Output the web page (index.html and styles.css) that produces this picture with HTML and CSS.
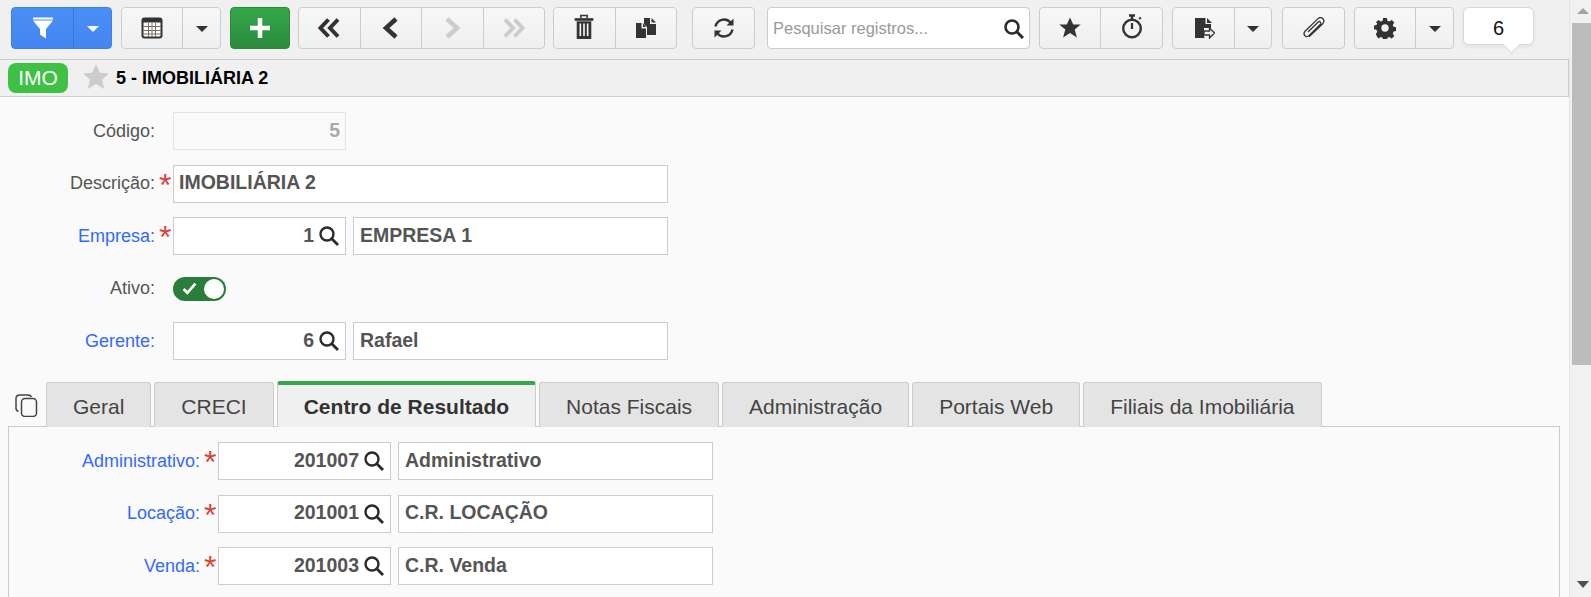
FILE: index.html
```html
<!DOCTYPE html>
<html lang="pt-BR">
<head>
<meta charset="utf-8">
<title>IMOBILIÁRIA 2</title>
<link rel="stylesheet" href="styles.css">
</head>
<body>
<div class="page">
  <main class="main">
    <div class="toolbar">
      <div class="group blue g101 mr9">
        <button class="btn"><svg class="ico" viewBox="0 0 22 22"><path d="M1 .5h20v2H1zM1 3.500h20l-7 8.500v9.500l-6-4V12z" fill="#fff"/></svg></button>
        <button class="btn caret"><i class="tri white"></i></button>
      </div>
      <div class="group g100 mr9">
        <button class="btn"><svg class="ico" viewBox="0 0 22 22"><rect x="1.500" y="1.500" width="19" height="19" rx="2" fill="#fff" stroke="#333" stroke-width="2"/><rect x="2" y="2" width="18" height="3.500" fill="#333"/><path d="M2 9.500h18M2 13.500h18M2 17h18M7.500 6v14M11 6v14M14.500 6v14" stroke="#7d6f66" stroke-width="1" fill="none"/></svg></button>
        <button class="btn caret"><i class="tri"></i></button>
      </div>
      <div class="group green g60 mr8">
        <button class="btn"><svg class="ico" viewBox="0 0 22 22"><path d="M11 1v20M1 11h20" stroke="#fff" stroke-width="4.500" fill="none"/></svg></button>
      </div>
      <div class="group g247 mr8">
        <button class="btn"><svg class="ico wide-ico" viewBox="0 0 24 22"><path d="M11.500 2.500 3.500 11l8 8.500M21 2.500 13 11l8 8.500" stroke="#333" stroke-width="4" fill="none"/></svg></button>
        <button class="btn"><svg class="ico" viewBox="0 0 22 22"><path d="M16 2 6 11l10 9" stroke="#333" stroke-width="4.500" fill="none"/></svg></button>
        <button class="btn"><svg class="ico" viewBox="0 0 22 22"><path d="M6 2l10 9-10 9" stroke="#ccc" stroke-width="4.500" fill="none"/></svg></button>
        <button class="btn"><svg class="ico wide-ico" viewBox="0 0 24 22"><path d="M3 2.500 11 11l-8 8.500M12.500 2.500 20.500 11l-8 8.500" stroke="#ccc" stroke-width="4" fill="none"/></svg></button>
      </div>
      <div class="group g124 mr15">
        <button class="btn"><svg class="ico tall" viewBox="0 0 20 24"><path d="M7 4V1.500h6V4" stroke="#333" stroke-width="1.500" fill="none"/><rect x="1" y="4" width="18" height="2.500" fill="#333"/><path d="M3 7h14v17H3z" fill="#333"/><path d="M6.500 9v12M10 9v12M13.500 9v12" stroke="#f2f2f2" stroke-width="1.600"/></svg></button>
        <button class="btn"><svg class="ico" viewBox="0 0 22 22"><path d="M9 1h6v6h6v11h-9V10L9 7z" fill="#333"/><path d="M16.500 1 21 5.500h-4.500z" fill="#333"/><path d="M1 6h5.500v5.500H11V21H1z" fill="#333"/><path d="M8 6l3 4H8z" fill="#333"/></svg></button>
      </div>
      <div class="group g63 mr12">
        <button class="btn"><svg class="ico" viewBox="0 0 22 22"><path d="M2.500 9.500A8.700 8.700 0 0 1 17.500 5.500M19.500 12.500A8.700 8.700 0 0 1 4.500 16.500" stroke="#333" stroke-width="2.400" fill="none"/><path d="M20.500 1.500v7h-7zM1.500 20.500v-7h7z" fill="#333"/></svg></button>
      </div>
      <div class="search mr9">
        <span class="placeholder">Pesquisar registros...</span>
        <svg class="lens lens-lg" viewBox="0 0 20 20"><circle cx="8" cy="8" r="6.500" fill="none" stroke="#2b2b2b" stroke-width="2.600"/><path d="M12.800 12.800 19 19" stroke="#2b2b2b" stroke-width="3" fill="none"/></svg>
      </div>
      <div class="group g124 mr9">
        <button class="btn star-btn"><svg class="ico" viewBox="0 0 22 22"><path d="M11 .5l3.200 7h7.500l-6 4.900 2.200 8.100L11 16l-6.900 4.500 2.200-8.100-6-4.900h7.500z" fill="#333"/></svg></button>
        <button class="btn"><svg class="ico tall" viewBox="0 0 22 25"><path d="M8 1.500h6M11 2v3" stroke="#333" stroke-width="2.500" fill="none"/><path d="M18 5l2-1.500" stroke="#333" stroke-width="1.800" fill="none"/><circle cx="11" cy="14.500" r="8.800" fill="none" stroke="#333" stroke-width="2.400"/><path d="M11 9v6" stroke="#333" stroke-width="2.200" fill="none"/></svg></button>
      </div>
      <div class="group g100 mr10">
        <button class="btn"><svg class="ico" viewBox="0 0 22 22"><path d="M2 1h10.500v6H18v4h-7v9l1 1H2z" fill="#333"/><path d="M14 1l5 5h-5z" fill="#333"/><path d="M11 14h5.500v-3l5 5-5 5v-3H11z" fill="#f2f2f2" stroke="#333" stroke-width="1.300"/></svg></button>
        <button class="btn caret narrow"><i class="tri"></i></button>
      </div>
      <div class="group g63 mr9">
        <button class="btn"><svg class="ico" viewBox="0 0 22 22"><path d="M6 19.800 19.500 7c2-2 1.700-4 .4-5.300-1.300-1.300-3.500-1.400-5.200.2L2.300 14c-1.500 1.500-1.500 3.500-.4 4.700 1.100 1.100 2.800 1.200 4.300-.3L17.300 7.500c.8-.8.700-1.800.1-2.400-.7-.7-1.600-.7-2.400.1L5 15" fill="none" stroke="#333" stroke-width="1.300"/></svg></button>
      </div>
      <div class="group g100 mr9">
        <button class="btn"><svg class="ico" viewBox="0 0 22 22"><path fill-rule="evenodd" fill="#333" d="M9 0h4l.6 3 2 .9 2.700-1.700 2.800 2.800-1.700 2.700.9 2 3 .6v4l-3 .6-.9 2 1.700 2.700-2.800 2.800-2.700-1.700-2 .9-.6 3H9l-.6-3-2-.9-2.700 1.700L.9 17.700l1.700-2.700-.9-2-3-.6v-4l3-.6.9-2L.9 5l2.800-2.800 2.700 1.700 2-.9zM11 7a4 4 0 1 0 0 8 4 4 0 0 0 0-8z" transform="translate(.9 .9) scale(.92)"/></svg></button>
        <button class="btn caret"><i class="tri"></i></button>
      </div>
      <div class="count">6</div>
    </div>

    <div class="title-bar">
      <span class="tag">IMO</span>
      <svg class="title-star" viewBox="0 0 26 25"><path d="M13 0l3.800 8.800 9.200.8-7 6.200 2.200 9.200L13 20l-8.200 5L7 15.800 0 9.600l9.200-.8z" fill="#ccc"/></svg>
      <span class="title-text">5 - IMOBILIÁRIA 2</span>
    </div>

    <form class="form">
      <div class="row">
        <label class="label">Código:</label><span class="req"></span>
        <div class="field code disabled"><span>5</span></div>
      </div>
      <div class="row">
        <label class="label">Descrição:</label><span class="req">*</span>
        <div class="field wide"><span>IMOBILIÁRIA 2</span></div>
      </div>
      <div class="row">
        <label class="label link">Empresa:</label><span class="req">*</span>
        <div class="field code"><span>1</span><svg class="lens" viewBox="0 0 20 20"><circle cx="8" cy="8" r="6.500" fill="none" stroke="#2b2b2b" stroke-width="2.400"/><path d="M12.800 12.800 19 19" stroke="#2b2b2b" stroke-width="2.800" fill="none"/></svg></div>
        <div class="field name"><span>EMPRESA 1</span></div>
      </div>
      <div class="row">
        <label class="label">Ativo:</label><span class="req"></span>
        <div class="toggle"><svg class="check" viewBox="0 0 14 12"><path d="M1.500 6.500 5 10l7.500-8.500" fill="none" stroke="#fff" stroke-width="2.500"/></svg><i class="knob"></i></div>
      </div>
      <div class="row">
        <label class="label link">Gerente:</label><span class="req"></span>
        <div class="field code"><span>6</span><svg class="lens" viewBox="0 0 20 20"><circle cx="8" cy="8" r="6.500" fill="none" stroke="#2b2b2b" stroke-width="2.400"/><path d="M12.800 12.800 19 19" stroke="#2b2b2b" stroke-width="2.800" fill="none"/></svg></div>
        <div class="field name"><span>Rafael</span></div>
      </div>
    </form>

    <div class="tabs">
      <svg class="tabs-icon" viewBox="0 0 23 23"><rect x="6.500" y="4.500" width="15" height="18" rx="3.500" fill="none" stroke="#444" stroke-width="1.500"/><path d="M3.500 17.500C2 17 1 16 1 14V4.500C1 2 2.500 1 5 1h8c1.500 0 3 .8 3.500 2" fill="none" stroke="#444" stroke-width="1.500"/></svg>
      <a class="tab">Geral</a>
      <a class="tab">CRECI</a>
      <a class="tab active">Centro de Resultado</a>
      <a class="tab">Notas Fiscais</a>
      <a class="tab">Administração</a>
      <a class="tab">Portais Web</a>
      <a class="tab">Filiais da Imobiliária</a>
    </div>
    <section class="panel">
      <div class="row">
        <label class="label link">Administrativo:</label><span class="req">*</span>
        <div class="field code"><span>201007</span><svg class="lens" viewBox="0 0 20 20"><circle cx="8" cy="8" r="6.500" fill="none" stroke="#2b2b2b" stroke-width="2.400"/><path d="M12.800 12.800 19 19" stroke="#2b2b2b" stroke-width="2.800" fill="none"/></svg></div>
        <div class="field name"><span>Administrativo</span></div>
      </div>
      <div class="row">
        <label class="label link">Locação:</label><span class="req">*</span>
        <div class="field code"><span>201001</span><svg class="lens" viewBox="0 0 20 20"><circle cx="8" cy="8" r="6.500" fill="none" stroke="#2b2b2b" stroke-width="2.400"/><path d="M12.800 12.800 19 19" stroke="#2b2b2b" stroke-width="2.800" fill="none"/></svg></div>
        <div class="field name"><span>C.R. LOCAÇÃO</span></div>
      </div>
      <div class="row">
        <label class="label link">Venda:</label><span class="req">*</span>
        <div class="field code"><span>201003</span><svg class="lens" viewBox="0 0 20 20"><circle cx="8" cy="8" r="6.500" fill="none" stroke="#2b2b2b" stroke-width="2.400"/><path d="M12.800 12.800 19 19" stroke="#2b2b2b" stroke-width="2.800" fill="none"/></svg></div>
        <div class="field name"><span>C.R. Venda</span></div>
      </div>
    </section>
  </main>
  <aside class="scrollbar">
    <i class="arrow-up"></i>
    <div class="thumb"></div>
    <i class="arrow-down"></i>
  </aside>
</div>
</body>
</html>
```
FILE: styles.css
```css
* { box-sizing: border-box; }
html, body { margin: 0; height: 597px; overflow: hidden; }
body { font-family: "Liberation Sans", Arial, sans-serif; color: #555; background: #fafafa; }

.page { display: flex; height: 597px; }
.main { width: 1569px; flex: none; height: 597px; overflow: hidden; }

/* Toolbar */
.toolbar { display: flex; align-items: flex-start; height: 59px; padding: 7px 0 0 11px; background: #f0f0f0; }
.group { display: flex; height: 42px; border: 1px solid #ccc; border-radius: 4px; background: linear-gradient(#f7f7f7, #efefef); }
.g60 { width: 60px; }
.g63 { width: 63px; }
.g100 { width: 100px; }
.g101 { width: 101px; }
.g124 { width: 124px; }
.g247 { width: 247px; }
.btn { display: flex; flex: 1; align-items: center; justify-content: center; height: 100%; padding: 0; border: 0; border-left: 1px solid #ccc; background: none; }
.btn:first-child { border-left: 0; }
.btn.caret { flex: none; width: 38px; }
.btn.caret.narrow { width: 37px; }
.btn.star-btn { flex: none; width: 60px; }
.blue { background: linear-gradient(#4a8ff5, #4585f0); border-color: #3f7fe8; }
.blue .btn { border-left-color: #3a75d8; }
.green { background: linear-gradient(#34a84a, #2b8a3c); border-color: #2b8a3c; }
.mr8 { margin-right: 8px; }
.mr9 { margin-right: 9px; }
.mr10 { margin-right: 10px; }
.mr12 { margin-right: 12px; }
.mr15 { margin-right: 15px; }
.ico { width: 22px; height: 22px; display: block; }
.ico.wide-ico { width: 24px; }
.ico.tall { height: 25px; margin-top: -3px; }
.tri { display: block; width: 0; height: 0; margin-top: 2px; border-left: 6px solid transparent; border-right: 6px solid transparent; border-top: 6px solid #333; }
.tri.white { border-top-color: #fff; }

.search { display: flex; align-items: center; justify-content: space-between; width: 263px; height: 42px; padding: 0 5px; background: #fff; border: 1px solid #ccc; border-radius: 4px; }
.placeholder { font-size: 16.5px; color: #999; }
.lens { width: 20px; height: 20px; flex: none; }
.lens-lg { margin-top: 2px; }

.count { position: relative; width: 71px; height: 38px; padding-top: 9px; text-align: center; font-size: 20px; color: #111; background: #fff; border: 1px solid #d8d8d8; border-radius: 6px; box-shadow: 0 2px 4px rgba(0,0,0,.06); }
.count::after { content: ""; position: absolute; left: 41px; bottom: -7px; width: 12px; height: 12px; background: #fff; border-right: 1px solid #d8d8d8; border-bottom: 1px solid #d8d8d8; transform: rotate(45deg); }

/* Title */
.title-bar { display: flex; align-items: center; height: 38px; padding-left: 8px; background: #f0f0f0; border: 1px solid #ccc; border-width: 1px 1px 1px 0; }
.tag { display: flex; align-items: center; justify-content: center; width: 60px; height: 30px; font-size: 21px; color: #fff; background: #3fc145; border-radius: 8px; }
.title-star { width: 26px; height: 25px; margin: -3px 7px 0 15px; }
.title-text { font-size: 18px; font-weight: 700; color: #000; }

/* Form */
.form { display: flex; flex-direction: column; gap: 14.5px; padding: 15px 0 0; }
.row { display: flex; align-items: center; height: 38px; }
.label { width: 155px; text-align: right; font-size: 18px; color: #555; }
.label.link { color: #3369ff; }
.req { align-self: flex-start; width: 18px; height: 38px; padding: 5px 0 0 4px; font-size: 32px; line-height: 30px; color: #d9443a; }
.field { display: flex; align-items: center; height: 38px; padding: 0 6px 2px; font-size: 19.5px; font-weight: 700; color: #555; background: #fff; border: 1px solid #ccc; }
.code { justify-content: flex-end; gap: 5px; width: 173px; margin-right: 7px; }
.code.disabled { color: #aaa; background: #fafafa; border-color: #e4e4e4; padding-right: 5px; }
.code .lens { margin-top: 2px; }
.wide { width: 495px; padding-left: 5px; }
.name { width: 315px; }

.toggle { position: relative; display: flex; align-items: center; width: 53px; height: 24px; padding-left: 9px; background: #2a7d3a; border-radius: 12px; }
.check { width: 15px; height: 13px; }
.knob { position: absolute; right: 2px; top: 2px; width: 20px; height: 20px; background: #fff; border-radius: 50%; }

/* Tabs */
.tabs { position: relative; z-index: 1; display: flex; align-items: flex-end; gap: 3px; height: 46px; margin-top: 21px; padding-left: 15px; margin-bottom: -1px; }
.tabs-icon { width: 23px; height: 23px; margin: 0 5px 10px 0; align-self: flex-end; }
.tab { display: flex; align-items: center; justify-content: center; height: 45px; padding: 4px 26px 0; font-size: 21px; color: #444; background: #e4e4e4; border: 1px solid #ccc; border-bottom: 0; border-radius: 3px 3px 0 0; }
.tab.active { height: 46px; padding-top: 1px; font-weight: 700; color: #333; background: #f0f0f0; border-top: 4px solid #34a84a; }

/* Tab panel */
.panel { display: flex; flex-direction: column; gap: 14.5px; width: 1552px; height: 200px; margin-left: 8px; padding-top: 15px; background: #fafafa; border: 1px solid #ccc; }
.panel .label { width: 191px; }

/* Scrollbar */
.scrollbar { position: relative; flex: 1; height: 597px; background: #f1f1f1; border-left: 1px solid #e4e4e4; }
.thumb { position: absolute; top: 23px; left: 2px; right: 0; height: 342px; background: #bcbcbc; }
.arrow-up, .arrow-down { position: absolute; left: 7px; width: 0; height: 0; border-left: 6px solid transparent; border-right: 6px solid transparent; }
.arrow-up { top: 8px; border-bottom: 6px solid #a3a3a3; }
.arrow-down { top: 581px; border-top: 7px solid #505050; }
```
